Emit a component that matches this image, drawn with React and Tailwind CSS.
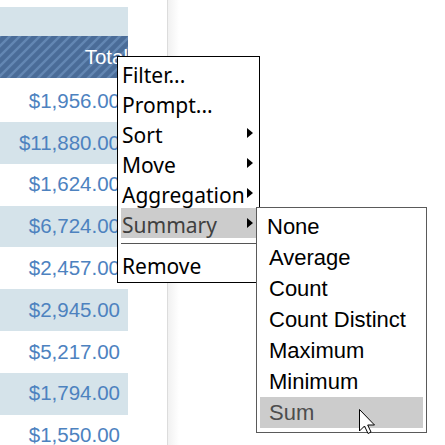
export default function App() {
  const rows = [
    '$1,956.00',
    '$11,880.00',
    '$1,624.00',
    '$6,724.00',
    '$2,457.00',
    '$2,945.00',
    '$5,217.00',
    '$1,794.00',
    '$1,550.00',
  ];

  const menuItems = [
    { label: 'Filter...' },
    { label: 'Prompt...' },
    { label: 'Sort', sub: true },
    { label: 'Move', sub: true },
    { label: 'Aggregation', sub: true },
    { label: 'Summary', sub: true, active: true },
  ];

  const summaryItems = ['None', 'Average', 'Count', 'Count Distinct', 'Maximum', 'Minimum', 'Sum'];

  return (
    <div className="relative w-[445px] h-[445px] overflow-hidden bg-white font-['Liberation_Sans',Arial,sans-serif]">
      <div className="flex h-full">
        {/* table column */}
        <div className="w-[128px] pt-[7px] shrink-0">
          <div className="h-[29px] bg-[#d5e3ea]" />
          <div className="relative h-[42px] flex items-center justify-end text-[20.5px] text-white bg-[#4a6c98]">
            {/* hatching */}
            <svg className="absolute inset-0" width="128" height="42">
              <defs>
                <pattern id="hatch" width="10" height="10" patternUnits="userSpaceOnUse">
                  <path
                    d="M-2.5 2.5 L2.5 -2.5 M0 10 L10 0 M7.5 12.5 L12.5 7.5"
                    stroke="#6387b3"
                    strokeWidth="2.4"
                  />
                </pattern>
              </defs>
              <rect width="128" height="42" fill="url(#hatch)" />
            </svg>
            <span className="relative">Total</span>
          </div>
          {rows.map((v, i) => (
            <div
              key={v}
              className={`${i === 0 ? 'h-[44px] pt-[2px]' : 'h-[41.8px]'} flex items-center justify-end pr-[8px] text-[20.5px] text-[#4d82bf] ${i % 2 === 1 ? 'bg-[#d5e3ea]' : 'bg-white'}`}
            >
              {v}
            </div>
          ))}
        </div>
        <div className="ml-[39px] w-[12px] border-l border-[#dcdcdc] bg-gradient-to-r from-[#f1f1f1] to-white" />
      </div>

      {/* context menu */}
      <div className="absolute left-[117px] top-[56px] w-[143px] h-[227px] border border-black bg-white px-[3px] pt-[1px] font-['Noto_Sans',sans-serif] text-[21px] text-black">
        {menuItems.map((m) => (
          <div
            key={m.label}
            className={`h-[30px] flex items-center justify-between pl-[1px] pr-[3px] leading-none ${m.active ? 'bg-[#cccccc] text-[#404040]' : ''}`}
          >
            <span className="pt-[4px]">{m.label}</span>
            {m.sub && (
              <svg className="shrink-0" width="6" height="10" viewBox="0 0 6 10">
                <path d="M0 0 L6 5 L0 10 Z" fill="#000" />
              </svg>
            )}
          </div>
        ))}
        <div className="mt-[5px] mb-[5px] h-px bg-[#555]" />
        <div className="h-[30px] flex items-center pl-[1px] leading-none">
          <span className="pt-[4px]">Remove</span>
        </div>
      </div>

      {/* summary submenu */}
      <div className="absolute left-[256px] top-[207px] w-[171px] h-[226px] border border-[#5a5a5a] bg-white px-[3px] pt-[3px] text-[22px] text-black">
        {summaryItems.map((s) => (
          <div
            key={s}
            className={`h-[31px] flex items-center leading-none ${s === 'None' ? 'pl-[7px]' : 'pl-[9px]'} ${s === 'Sum' ? 'bg-[#cccccc] text-[#4d4d4d]' : ''}`}
          >
            {s}
          </div>
        ))}
      </div>

      {/* mouse pointer */}
      <svg className="absolute left-[359px] top-[409px]" width="18" height="27" viewBox="0 0 18 27">
        <path
          d="M0.5 0.5 V22 L5.5 17 L9 24.5 L12 23 L8.7 16 H15.5 Z"
          fill="#fff"
          stroke="#000"
          strokeWidth="1"
          strokeLinejoin="round"
        />
      </svg>
    </div>
  );
}
